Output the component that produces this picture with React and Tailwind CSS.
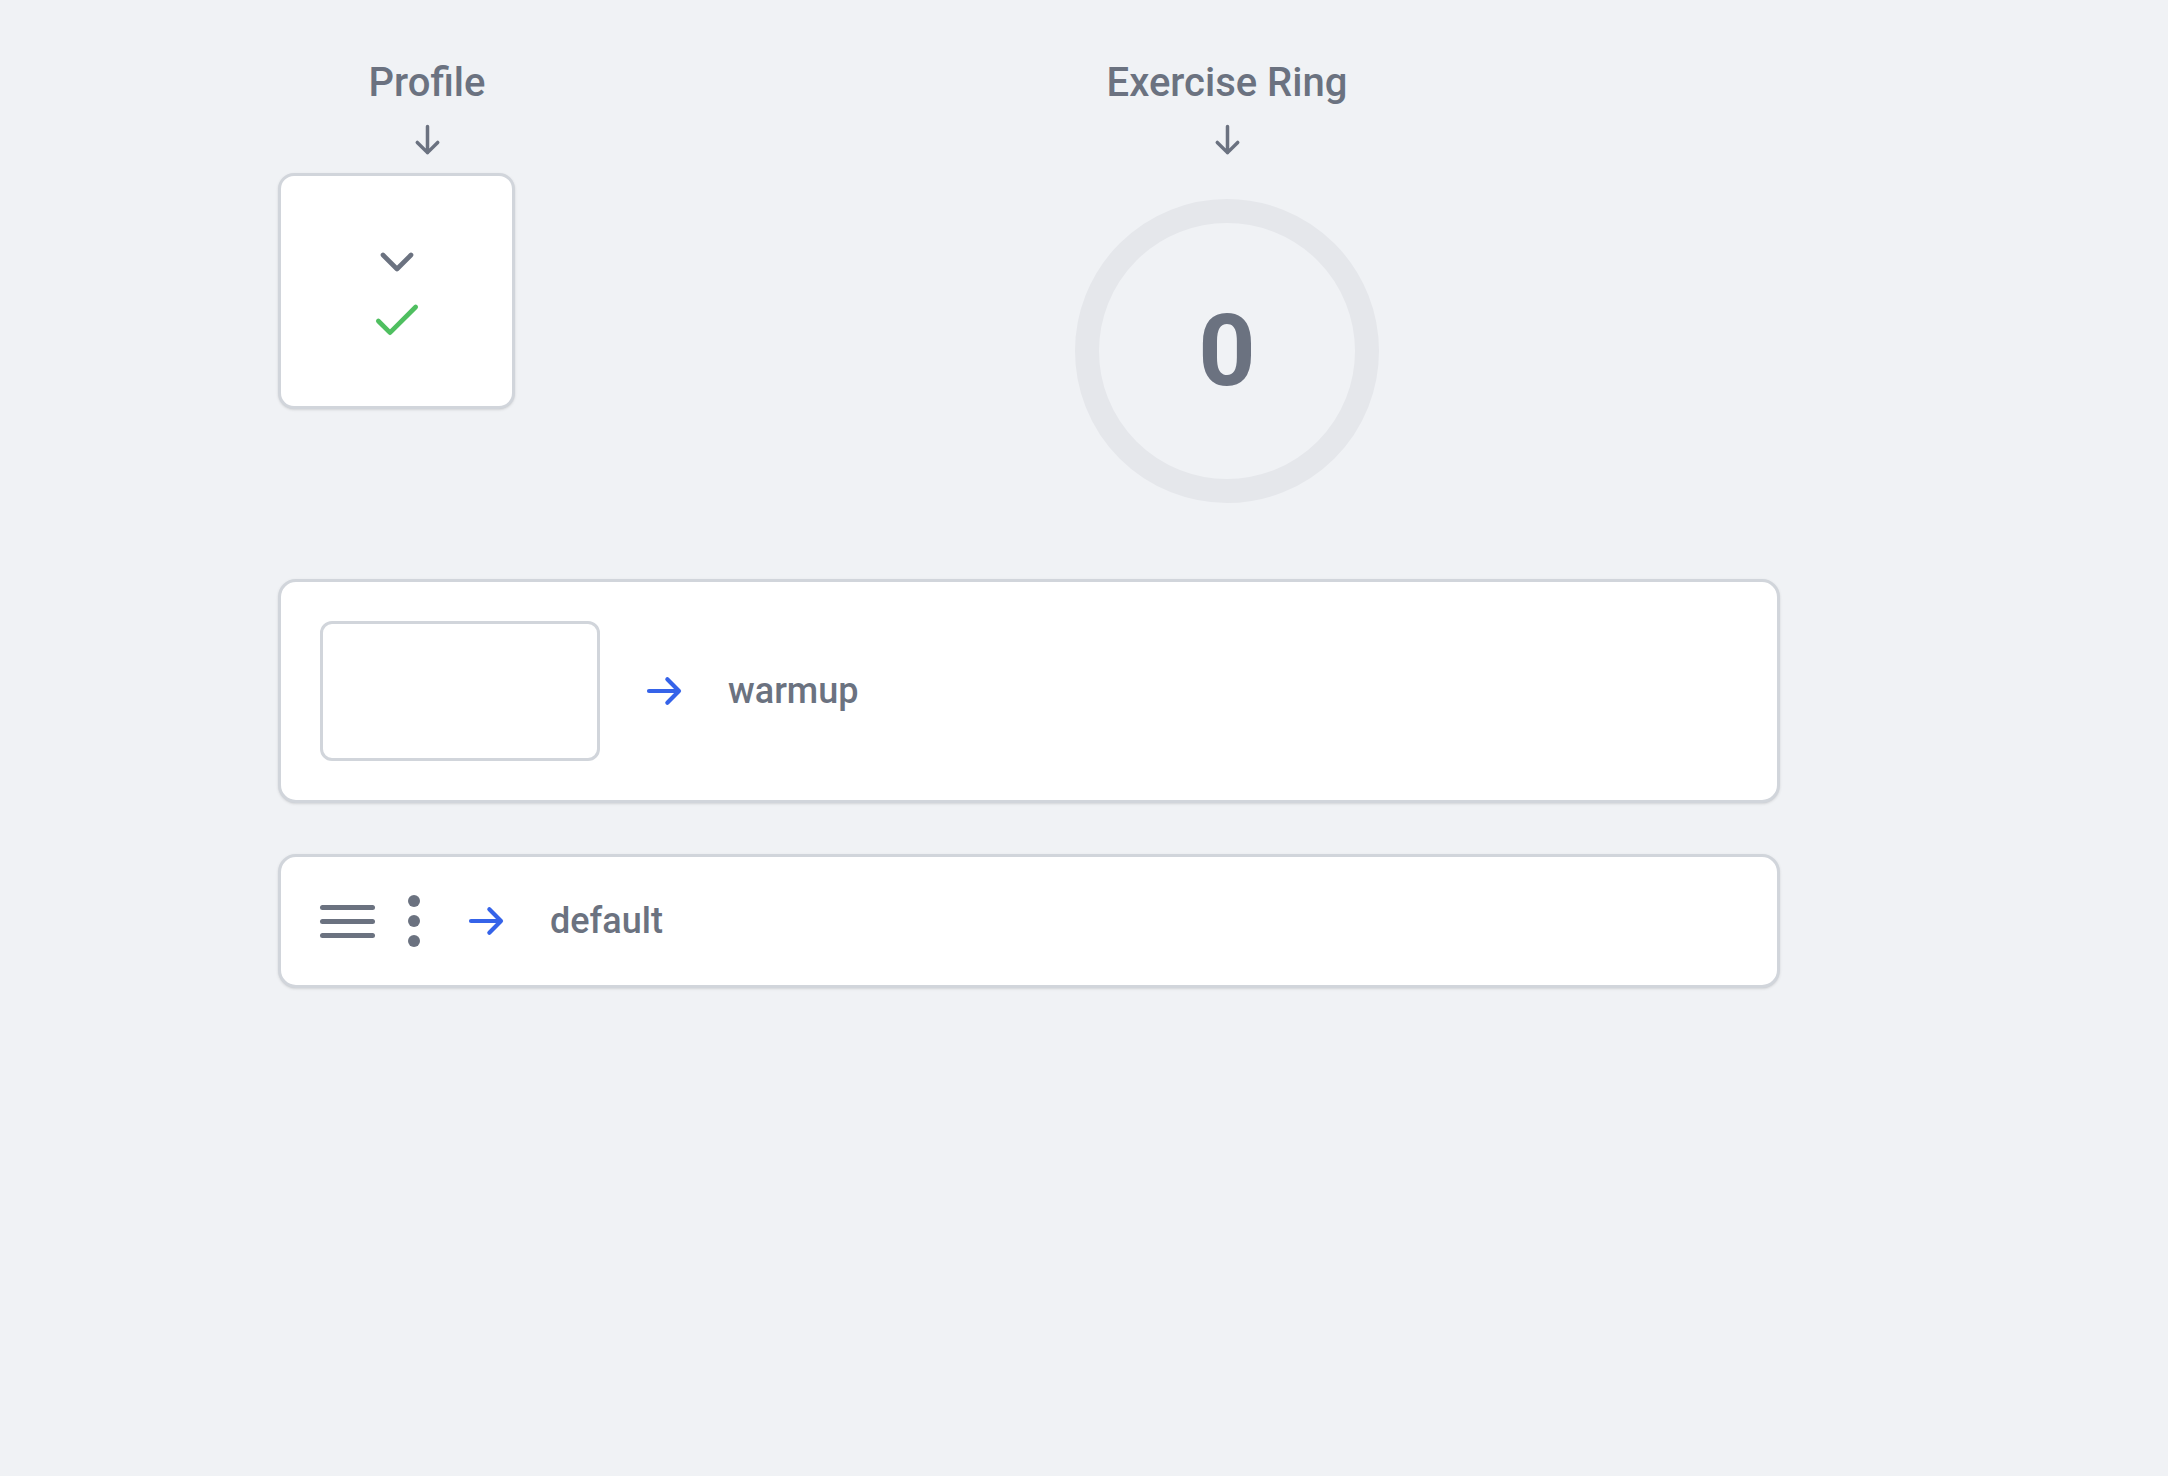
import { Check, ChevronDown } from 'lucide-react';

const font = { fontFamily: 'Roboto, "Liberation Sans", sans-serif' };

function ArrowDown() {
  return (
    <svg width="35" height="35" viewBox="0 0 24 24" fill="none" stroke="currentColor"
      strokeWidth="2.4" strokeLinecap="round" strokeLinejoin="round">
      <path d="M19 14l-7 7m0 0l-7-7m7 7V3" />
    </svg>
  );
}

function ArrowRight() {
  return (
    <svg width="40" height="40" viewBox="0 0 24 24" fill="none" stroke="currentColor"
      strokeWidth="2.5" strokeLinecap="round" strokeLinejoin="round" className="shrink-0 text-[#3563e9]">
      <path d="M14 5l7 7m0 0l-7 7m7-7H3" />
    </svg>
  );
}

function Hamburger() {
  return (
    <div className="flex flex-col gap-[9px] w-[55px] shrink-0">
      <div className="h-[5px] rounded-full bg-[#6b7280]" />
      <div className="h-[5px] rounded-full bg-[#6b7280]" />
      <div className="h-[5px] rounded-full bg-[#6b7280]" />
    </div>
  );
}

function Dots() {
  return (
    <div className="flex flex-col gap-[8px] shrink-0">
      <div className="w-[12px] h-[12px] rounded-full bg-[#6b7280]" />
      <div className="w-[12px] h-[12px] rounded-full bg-[#6b7280]" />
      <div className="w-[12px] h-[12px] rounded-full bg-[#6b7280]" />
    </div>
  );
}

function Label({ children }) {
  return (
    <h2 className="text-[40px] leading-[48px] font-medium text-[#6b7280]">{children}</h2>
  );
}

export default function App() {
  return (
    <div style={font} className="min-h-screen bg-[#f0f2f5] pl-[278px] pt-[59px]">
      {/* Top row */}
      <div className="flex items-start">
        <div className="w-[298px] flex flex-col items-center">
          <Label>Profile</Label>
          <div className="mt-[15px] text-[#6b7280]"><ArrowDown /></div>
          <div className="self-start mt-[16px] w-[237px] h-[236px] bg-white border-[3px] border-[#d1d5db] rounded-2xl shadow-sm flex flex-col items-center justify-center gap-[3px]">
            <ChevronDown size={56} strokeWidth={2} className="text-[#6b7280]" />
            <Check size={56} strokeWidth={2} className="text-[#4fbf60]" />
          </div>
        </div>

        <div className="ml-[499px] w-[304px] flex flex-col items-center">
          <Label>Exercise Ring</Label>
          <div className="mt-[15px] text-[#6b7280]"><ArrowDown /></div>
          <div className="mt-[42px] w-[304px] h-[304px] rounded-full border-[24px] border-[#e5e7eb] flex items-center justify-center">
            <span className="text-[100px] leading-none font-bold text-[#6b7280]">0</span>
          </div>
        </div>
      </div>

      {/* Panels */}
      <div className="w-[1502px] mt-[76px] flex flex-col gap-[51px]">
        <div className="bg-white border-[3px] border-[#d1d5db] rounded-[18px] shadow-sm p-[39px] flex items-center gap-[44px]">
          <div className="w-[280px] h-[140px] shrink-0 border-[3px] border-[#d1d5db] rounded-xl" />
          <ArrowRight />
          <span className="text-[36px] leading-[44px] font-medium text-[#6b7280]">warmup</span>
        </div>

        <div className="bg-white border-[3px] border-[#d1d5db] rounded-[18px] shadow-sm px-[39px] py-[38px] flex items-center">
          <Hamburger />
          <div className="ml-[33px]"><Dots /></div>
          <div className="ml-[46px] flex items-center gap-[44px]">
            <ArrowRight />
            <span className="text-[36px] leading-[44px] font-medium text-[#6b7280]">default</span>
          </div>
        </div>
      </div>
    </div>
  );
}
